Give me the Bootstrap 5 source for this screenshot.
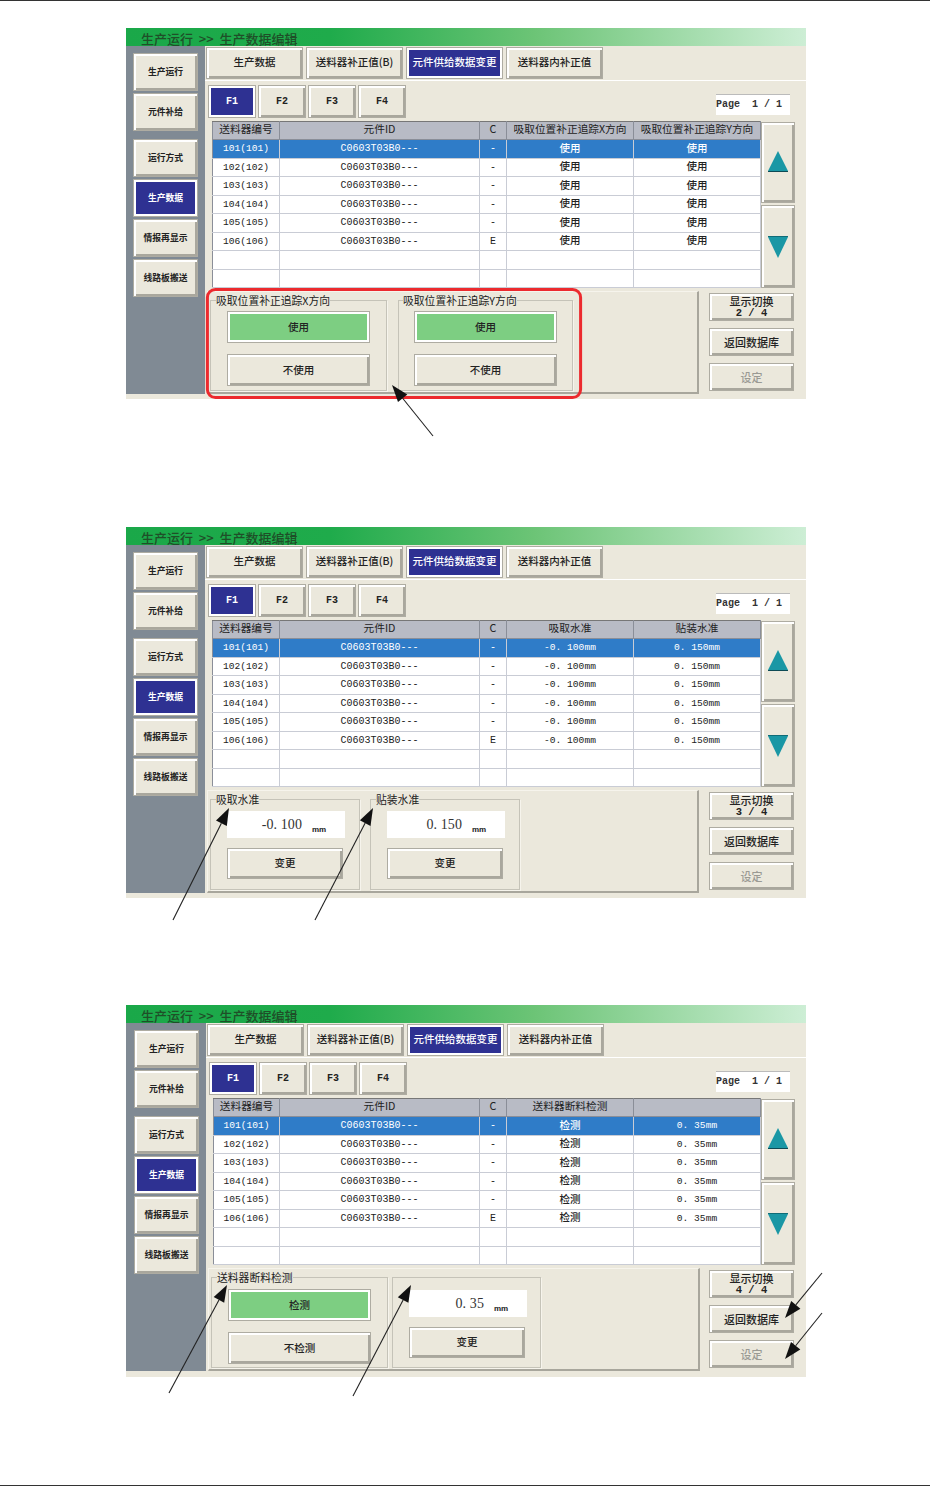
<!DOCTYPE html>
<html lang="zh-CN">
<head>
    <meta charset="UTF-8">
    <meta name="viewport" content="width=device-width, initial-scale=1.0">
    <title>生产数据编辑</title>
    <link rel="stylesheet" href="https://cdn.jsdelivr.net/npm/bootstrap@5.3.0/dist/css/bootstrap.min.css">
    <style>
        html, body { margin: 0; background: #fff; }
        body { font-family: "Liberation Mono", "Noto Sans CJK SC", monospace; color: #222; }
        .sheet { height: 1486px; border-top: 1px solid #333; border-bottom: 1px solid #333; overflow: hidden; }
        .hmi-wrap { position: relative; width: 680px; margin-left: 126px; }
        .hmi-wrap-1 { margin-top: 27px; }
        .hmi-wrap-2 { margin-top: 128px; }
        .hmi-wrap-3 { margin-top: 107px; }
        .hmi-panel { height: 371px; background: #ebe8dc; }
        .hmi-wrap-3 .hmi-panel { height: 372px; }
        .hmi-title { height: 18px; padding: 3px 0 0 15px; font-size: 13px; line-height: 15px; font-weight: 500; color: #1f4f28; white-space: pre;
            font-family: "Noto Sans CJK SC", sans-serif;
            background: linear-gradient(90deg, #1aa849 0%, #1fab4b 30%, #6cc476 60%, #cdeed5 100%); }
        .hmi-side { width: 79px; flex: none; background: #808a94; padding: 7px 6px 0 7px; }
        .hmi-wrap-3 .hmi-side { width: 80px; padding-left: 8px; }
        .hmi-main { flex: 1; min-width: 0; }
        .hmi-btn.btn { display: flex; align-items: center; justify-content: center; padding: 0; border-radius: 0; line-height: 1.15;
            background: #ebe8dc; color: #222; border: 1px solid #aeaca2; text-align: center; white-space: nowrap;
            font-family: "Noto Sans CJK SC", sans-serif; font-size: 10.5px; font-weight: 500;
            box-shadow: inset 2px 2px 0 #fff, inset -2px -2px 0 #a9a79d; }
        .hmi-btn.btn:disabled { opacity: 1; color: #9a9a94; background: #ebe8dc; border-color: #aeaca2; }
        .hmi-btn.btn-on { background: #2e3192; color: #fff; box-shadow: inset 2px 2px 0 #fff, inset -2px -2px 0 #fff; }
        .hmi-btn.btn-green { background: #7dce82; box-shadow: inset 2px 2px 0 #fff, inset -2px -2px 0 #fff; }
        .side-btn.btn { width: 65px; height: 38px; font-size: 8.8px; font-weight: 700; margin-bottom: 2px; }
        .side-btn.btn:nth-child(3) { margin-top: 8px; }
        .hmi-tabs { padding: 1px 0 1px 1px; border-bottom: 1px solid #fff; gap: 3px; }
        .top-tab.btn { height: 32px; width: 97px; padding-bottom: 2px; }
        .hmi-sub { margin-top: 4px; padding-left: 3px; gap: 2px; height: 33px; }
        .sub-tab.btn { width: 48px; height: 33px; padding-top: 1px; font-family: "Liberation Mono", monospace; font-weight: 700; font-size: 10px; }
        .page-box { width: 74px; height: 21px; margin: 0 16px 3px auto; background: #fff; border-top: 1px solid #bbb; font-size: 10px; font-weight: 700; line-height: 20px; white-space: pre; color: #333; }
        .hmi-mid { margin-top: 3px; padding-left: 7px; height: 167px; }
        .hmi-tablebox { flex: 1; min-width: 0; background: #fff; }
        .table.hmi-table { table-layout: fixed; width: 100%; margin: 0; border-color: #c9ccd5; font-size: 10px; line-height: 1.2; --bs-table-color: #222; }
        .table.hmi-table th, .table.hmi-table td { padding: 0; text-align: center; vertical-align: middle; white-space: nowrap; overflow: hidden; border-width: 0 1px 1px 0; border-color: #c9ccd5; font-weight: 400; }
        .table.hmi-table th { height: 18px; padding-bottom: 2px; background: #b8bbc5; border-color: #8a8e98; border-top: 1px solid #777; font-family: "Noto Sans CJK SC", sans-serif; font-size: 10.7px; color: #222; }
        .table.hmi-table th:first-child, .table.hmi-table td:first-child { border-left: 1px solid #8a8e98; }
        .table.hmi-table td { height: 18px; }
        .table.hmi-table tbody tr:nth-child(odd) td { height: 19px; }
        .table.hmi-table tr.row-sel td { background: #2f7cc8; color: #fff; }
        .table.hmi-table td.cn { padding-bottom: 2px; font-family: "Noto Sans CJK SC", sans-serif; font-size: 10.5px; font-weight: 500; }
        .table.hmi-table td.num { font-size: 9.6px; }
        .col-cid { width: 200px; }
        .col-c { width: 27px; }
        .col-val { width: 127px; }
        .hmi-scroll { width: 34px; flex: none; margin: 1px 11px 0 0; gap: 2px; }
        .scroll-up.btn { width: 34px; height: 81px; padding-bottom: 2px; }
        .scroll-down.btn { width: 34px; height: 83px; }
        .hmi-bottom { margin-top: 3px; padding-left: 2px; }
        .hmi-box { width: 492px; height: 103px; padding: 1px 0 0 2px; gap: 10px; border: 1px solid #f6f4ec; border-right: 2px solid #a8a69c; border-bottom: 2px solid #a8a69c; }
        .hmi-box.gap-wide { gap: 11px; }
        .hmi-box.gap-tight { gap: 4px; }
        .hmi-group { height: 98px; padding: 4px 0 0 16px; border: 1px solid #c5c3b8; box-shadow: 1px 1px 0 #f6f4ec; }
        .hmi-wrap-3 .grp-wide { padding-top: 5px; }
        .hmi-group legend { float: none; width: auto; margin: 0 0 0 -11px; padding: 0; font-family: "Noto Sans CJK SC", sans-serif; font-size: 10.8px; line-height: 14px; }
        .grp-wide { width: 177px; }
        .grp-wide2 { width: 175px; padding-left: 15px; }
        .grp-narrow { width: 150px; padding-top: 5px; }
        .grp-plain { width: 149px; height: 91px; margin-top: 7px; padding-top: 12px; }
        .grp-btn.btn { width: 143px; height: 32px; margin-bottom: 11px; }
        .val-box { width: 118px; height: 27px; background: #fff; margin-bottom: 10px; }
        .val-num { width: 75px; text-align: right; font-family: "Liberation Serif", serif; font-size: 14px; line-height: 28px; letter-spacing: .1px; color: #333; white-space: pre; }
        .val-unit { margin-left: 10px; padding-top: 13px; font-family: "Liberation Sans", sans-serif; font-size: 8px; font-weight: 700; line-height: 12px; }
        .val-btn.btn { width: 116px; height: 31px; }
        .hmi-right { width: 85px; margin-left: 10px; padding-top: 2px; gap: 7px; }
        .hmi-wrap-3 .hmi-right { margin-left: 9px; }
        .right-btn.btn { height: 28px; font-size: 11px; flex-direction: column; }
        .right-btn small { font-family: "Liberation Mono", monospace; font-size: 10.5px; font-weight: 700; line-height: 11px; white-space: pre; }
        .hmi-marks { position: absolute; left: 0; top: 0; width: 680px; height: 371px; overflow: visible; pointer-events: none; }
    </style>
</head>
<body>

    <div class="sheet" id="sheet"></div>

    <script src="https://cdn.jsdelivr.net/npm/bootstrap@5.3.0/dist/js/bootstrap.bundle.min.js"></script>
    <script>
const sideItems = ["生产运行", "元件补给", "运行方式", "生产数据", "情报再显示", "线路板搬送"];
const topItems = ["生产数据", "送料器补正值(B)", "元件供给数据变更", "送料器内补正值"];

// draws a leader line with its filled head, coordinates are page coordinates
function arrow(x1, y1, x2, y2, top) {
    let a = Math.atan2(y2 - y1, x2 - x1);
    let len = 17, wide = 6;
    let bx = x2 - Math.cos(a) * len, by = y2 - Math.sin(a) * len;
    let nx = -Math.sin(a) * wide, ny = Math.cos(a) * wide;
    let pts = [[x2, y2], [bx + nx, by + ny], [bx - nx, by - ny]]
        .map(p => (p[0] - 126).toFixed(1) + "," + (p[1] - top).toFixed(1)).join(" ");
    return `<line x1="${x1 - 126}" y1="${y1 - top}" x2="${bx - 126}" y2="${by - top}" stroke="#222" stroke-width="1.1"/>
            <polygon points="${pts}" fill="#111"/>`;
}

function rowsHtml(p) {
    let html = "";
    for (let i = 0; i < 8; i++) {
        if (i > 5) {
            html += `<tr><td></td><td></td><td></td><td></td><td></td></tr>`;
            continue;
        }
        let n = 101 + i;
        let c = i === 5 ? "E" : "-";
        html += `<tr class="${i === 0 ? "row-sel" : ""}">
            <td class="num">${n}(${n})</td><td>C0603T03B0---</td><td>${c}</td>
            <td class="${p.cls4}">${p.val4}</td><td class="${p.cls5}">${p.val5}</td></tr>`;
    }
    return html;
}

function valueGroup(cls, legend, num) {
    return `<fieldset class="hmi-group ${cls}">
        ${legend ? `<legend>${legend}</legend>` : ""}
        <div class="val-box d-flex"><span class="val-num">${num}</span><span class="val-unit">mm</span></div>
        <button class="btn hmi-btn val-btn">变更</button>
    </fieldset>`;
}

function choiceGroup(cls, legend, on, off) {
    return `<fieldset class="hmi-group ${cls}">
        <legend>${legend}</legend>
        <button class="btn hmi-btn btn-green grp-btn">${on}</button>
        <button class="btn hmi-btn grp-btn">${off}</button>
    </fieldset>`;
}

function panelHtml(p, idx) {
    let side = sideItems.map((s, i) => `<button class="btn hmi-btn side-btn ${i === 3 ? "btn-on" : ""}">${s}</button>`).join("");
    let tabs = topItems.map((s, i) => `<button class="btn hmi-btn top-tab ${i === 2 ? "btn-on" : ""}">${s}</button>`).join("");
    let subs = ["F1", "F2", "F3", "F4"].map((s, i) => `<button class="btn hmi-btn sub-tab ${i === 0 ? "btn-on" : ""}">${s}</button>`).join("");
    return `<div class="hmi-wrap hmi-wrap-${idx}">
      <div class="hmi-panel">
        <div class="hmi-title">生产运行  >>  生产数据编辑</div>
        <div class="d-flex">
          <div class="hmi-side">${side}</div>
          <div class="hmi-main">
            <div class="hmi-tabs d-flex">${tabs}</div>
            <div class="hmi-sub d-flex align-items-end">${subs}<div class="page-box">Page  1 / 1</div></div>
            <div class="hmi-mid d-flex">
              <div class="hmi-tablebox">
                <table class="table table-bordered hmi-table">
                  <thead><tr><th>送料器编号</th><th class="col-cid">元件ID</th><th class="col-c">C</th><th class="col-val">${p.head4}</th><th class="col-val">${p.head5}</th></tr></thead>
                  <tbody>${rowsHtml(p)}</tbody>
                </table>
              </div>
              <div class="hmi-scroll d-flex flex-column">
                <button class="btn hmi-btn scroll-up"><svg width="20" height="21" viewBox="0 0 20 21"><path d="M10 0 20 20H0Z" fill="#1a97a5"/><path d="M0 20h20v1H0Z" fill="#0d4a55"/></svg></button>
                <button class="btn hmi-btn scroll-down"><svg width="20" height="22" viewBox="0 0 20 22"><path d="M0 1H20L10 22Z" fill="#1a97a5"/><path d="M0 0h20v1H0Z" fill="#0f6c78"/></svg></button>
              </div>
            </div>
            <div class="hmi-bottom d-flex">
              <div class="hmi-box d-flex ${p.boxCls}">${p.groups}</div>
              <div class="hmi-right d-flex flex-column">
                <button class="btn hmi-btn right-btn">显示切换<small>${p.page}</small></button>
                <button class="btn hmi-btn right-btn">返回数据库</button>
                <button class="btn hmi-btn right-btn" disabled>设定</button>
              </div>
            </div>
          </div>
        </div>
      </div>
      <svg class="hmi-marks">${p.marks}</svg>
    </div>`;
}

const panels = [
    {
        head4: "吸取位置补正追踪X方向", head5: "吸取位置补正追踪Y方向",
        val4: "使用", val5: "使用", cls4: "cn", cls5: "cn", page: "2 / 4", boxCls: "gap-wide",
        groups: choiceGroup("grp-wide", "吸取位置补正追踪X方向", "使用", "不使用") + choiceGroup("grp-wide2", "吸取位置补正追踪Y方向", "使用", "不使用"),
        marks: `<rect x="81.4" y="261.4" width="373.2" height="108.2" rx="8" fill="none" stroke="#ec2a2e" stroke-width="3"/>` + arrow(433, 436, 392, 385, 28)
    },
    {
        head4: "吸取水准", head5: "贴装水准",
        val4: "-0. 100mm", val5: "0. 150mm", cls4: "num", cls5: "num", page: "3 / 4", boxCls: "",
        groups: valueGroup("grp-narrow", "吸取水准", "-0. 100") + valueGroup("grp-narrow", "贴装水准", "0. 150"),
        marks: arrow(173, 920, 229, 808, 527) + arrow(315, 920, 373, 808, 527)
    },
    {
        head4: "送料器断料检测", head5: "",
        val4: "检测", val5: "0. 35mm", cls4: "cn", cls5: "num", page: "4 / 4", boxCls: "gap-tight",
        groups: choiceGroup("grp-wide", "送料器断料检测", "检测", "不检测") + valueGroup("grp-plain", "", "0. 35"),
        marks: arrow(169, 1393, 227, 1285, 1005) + arrow(353, 1396, 411, 1285, 1005) + arrow(822, 1273, 785, 1318, 1005) + arrow(822, 1313, 785, 1359, 1005)
    }
];

document.getElementById("sheet").innerHTML = panels.map((p, i) => panelHtml(p, i + 1)).join("");
    </script>

</body>
</html>
